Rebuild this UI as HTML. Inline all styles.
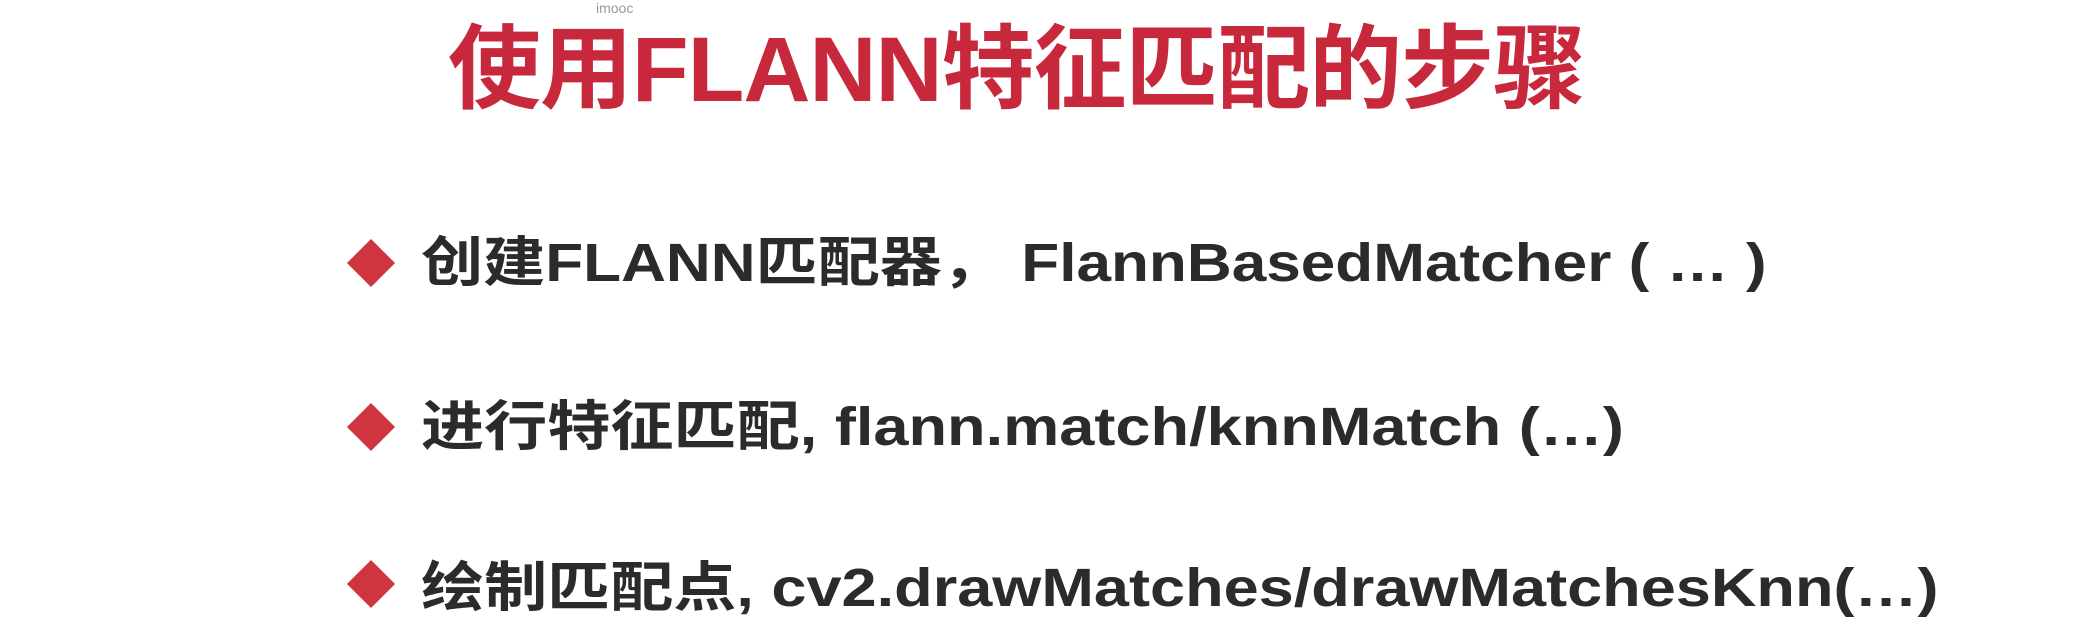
<!DOCTYPE html>
<html><head><meta charset="utf-8"><style>
html,body{margin:0;padding:0;background:#fff;width:2096px;height:636px;overflow:hidden;position:relative}
.t{position:absolute;white-space:nowrap;font-family:"Liberation Sans","Noto Sans CJK SC",sans-serif;font-weight:bold;transform-origin:0 50%}
.title{left:448px;top:-5px;font-size:92px;color:#c8283c;letter-spacing:-1px;transform:scaleX(1.01)}
.li{left:421px;font-size:54px;color:#2b2b2b;line-height:1}
.d{position:absolute;width:34px;height:34px;background:#d0343f;transform:rotate(45deg)}
.wm{position:absolute;left:596px;top:0px;font-family:"Liberation Sans",sans-serif;font-size:14px;color:#999}
</style></head><body>
<div class="wm">imooc</div>
<div class="t title">使用FLANN特征匹配的步骤</div>
<div class="d" style="left:354px;top:246px"></div>
<div class="t li" style="top:236px;transform:scaleX(1.15)">创建FLANN匹配器， FlannBasedMatcher ( … )</div>
<div class="d" style="left:354px;top:410px"></div>
<div class="t li" style="top:400px;transform:scaleX(1.169)">进行特征匹配, flann.match/knnMatch (…)</div>
<div class="d" style="left:354px;top:567px"></div>
<div class="t li" style="top:561px;transform:scaleX(1.168)">绘制匹配点, cv2.drawMatches/drawMatchesKnn(…)</div>
</body></html>
